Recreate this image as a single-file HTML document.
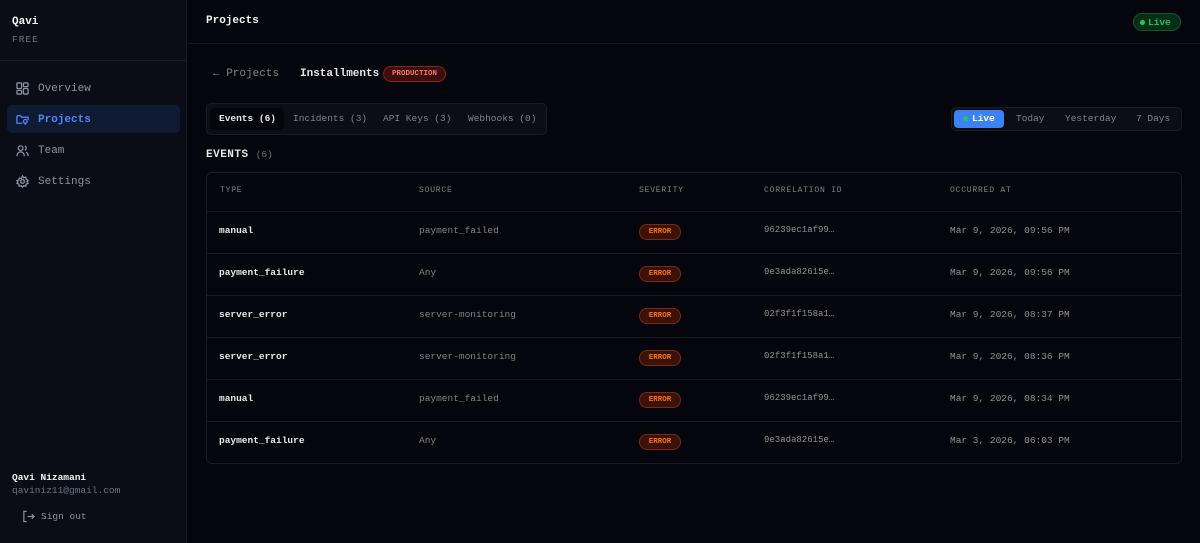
<!DOCTYPE html>
<html><head><meta charset="utf-8"><style>
*{box-sizing:border-box;margin:0;padding:0}
body{width:1200px;height:543px;background:#05060d;font-family:"Liberation Mono",monospace;color:#e5e7eb;position:relative;overflow:hidden}
.side{position:absolute;left:0;top:0;width:187px;height:543px;background:#0a0d16;border-right:1px solid #151a26}
.abs{position:absolute;white-space:nowrap}
.nav{position:absolute;left:7px;width:173px;height:28px;border-radius:5px;display:flex;align-items:center;padding-left:9px;font-size:11px;color:#8a919e;padding-top:1px}
.nav svg{width:13px;height:13px;margin-right:9px;fill:none;stroke:currentColor;stroke-width:1.4}
.nav.act{background:#0f1a33;color:#4f86f7;font-weight:bold}
.tbl{position:absolute;left:206px;top:172px;width:976px;height:292px;border:1px solid #171c27;border-radius:6px;overflow:hidden}
.row{position:absolute;left:0;right:0;height:42px;border-top:1px solid #151a24}
.row span{position:absolute;top:13px;font-size:9.5px;white-space:nowrap}
.err{position:absolute;left:432px;top:12px;width:42px;height:16px;border-radius:8px;background:#3b1108;border:1px solid #7a2a10;color:#f97316;font-size:7.5px;font-weight:bold;display:flex;align-items:center;justify-content:center}
</style></head><body>
<div class="side">
<div class="abs" style="left:12px;top:16px;font-size:11px;font-weight:bold;color:#f3f4f6">Qavi</div>
<div class="abs" style="left:12px;top:34px;font-size:9.5px;color:#6b7280;letter-spacing:1px">FREE</div>
<div style="position:absolute;left:0;top:60px;width:186px;border-top:1px solid #171c27"></div>
<div class="nav" style="top:74px"><svg viewBox="0 0 14 14"><rect x="1" y="1" width="5" height="6" rx="1"/><rect x="8" y="1" width="5" height="4" rx="1"/><rect x="1" y="9" width="5" height="4" rx="1"/><rect x="8" y="7" width="5" height="6" rx="1"/></svg>Overview</div>
<div class="nav act" style="top:105px"><svg viewBox="0 0 14 14"><path d="M1 3v8h6M1 3h4l1 1.5h7v3"/><circle cx="10" cy="9" r="2"/><path d="M10 11v2"/></svg>Projects</div>
<div class="nav" style="top:136px"><svg viewBox="0 0 14 14"><circle cx="5" cy="4.5" r="2.5"/><path d="M1 13c0-3 2-4.5 4-4.5s4 1.5 4 4.5M9.5 2.2a2.5 2.5 0 010 4.6M11 8.8c1.3.6 2 2 2 4.2"/></svg>Team</div>
<div class="nav" style="top:167px"><svg viewBox="0 0 14 14"><circle cx="7" cy="7" r="2"/><path d="M7 1l1.3 1.8 2.2-.5.4 2.2L13 6l-1.2 1.5L13 9l-2 .9-.4 2.2-2.2-.5L7 13l-1.3-1.4-2.2.5-.4-2.2L1 9l1.2-1.5L1 6l2.1-.5.4-2.2 2.2.5z"/></svg>Settings</div>
<div class="abs" style="left:12px;top:472px;font-size:9.5px;font-weight:bold;color:#f3f4f6">Qavi Nizamani</div>
<div class="abs" style="left:12px;top:485px;font-size:9.5px;color:#6b7280">qaviniz11@gmail.com</div>
<div class="abs" style="left:22px;top:510px;font-size:9.5px;color:#8a919e;display:flex;align-items:center"><svg width="13" height="13" viewBox="0 0 14 14" fill="none" stroke="#8a919e" stroke-width="1.3" style="margin-right:6px"><path d="M5 1.5H2v11h3M6 7h7M10.5 4.5L13 7l-2.5 2.5"/></svg>Sign out</div>
</div>
<div style="position:absolute;left:188px;top:43px;right:0;border-top:1px solid #151a24"></div>
<div class="abs" style="left:206px;top:15px;font-size:11px;font-weight:bold;color:#f3f4f6">Projects</div>
<div class="abs" style="left:1133px;top:13px;width:48px;height:18px;border-radius:10px;background:#052e16;border:1px solid #14532d;color:#22c55e;font-size:9.5px;font-weight:bold;display:flex;align-items:center;padding-left:6px"><span style="display:inline-block;width:5px;height:5px;border-radius:3px;background:#22c55e;margin-right:3px"></span>Live</div>
<div class="abs" style="left:213px;top:68px;font-size:11px;color:#7b828f">← Projects</div>
<div class="abs" style="left:300px;top:68px;font-size:11px;font-weight:bold;color:#e5e7eb">Installments</div>
<div class="abs" style="left:383px;top:66px;width:63px;height:16px;border-radius:8px;background:#3b0f0c;border:1px solid #8b2318;color:#f87171;font-size:7.5px;font-weight:bold;display:flex;align-items:center;justify-content:center">PRODUCTION</div>
<div class="abs" style="left:206px;top:103px;width:341px;height:32px;background:#0b0e17;border:1px solid #171c27;border-radius:5px"></div>
<div class="abs" style="left:210px;top:108px;width:74px;height:22px;background:#05060b;border-radius:4px"></div>
<div class="abs" style="left:219px;top:113px;font-size:9.5px;font-weight:bold;color:#e5e7eb">Events (6)</div>
<div class="abs" style="left:293px;top:113px;font-size:9.5px;color:#7b828f">Incidents (3)</div>
<div class="abs" style="left:383px;top:113px;font-size:9.5px;color:#7b828f">API Keys (3)</div>
<div class="abs" style="left:468px;top:113px;font-size:9.5px;color:#7b828f">Webhooks (0)</div>
<div class="abs" style="left:951px;top:107px;width:231px;height:24px;background:#0b0e17;border:1px solid #171c27;border-radius:5px"></div>
<div class="abs" style="left:954px;top:110px;width:50px;height:18px;background:#3b82f6;border-radius:4px"></div>
<div class="abs" style="left:963px;top:113px;font-size:9.5px;font-weight:bold;color:#fff;display:flex;align-items:center"><span style="display:inline-block;width:5px;height:5px;border-radius:3px;background:#22c55e;margin-right:4px"></span>Live</div>
<div class="abs" style="left:1016px;top:113px;font-size:9.5px;color:#7b828f">Today</div>
<div class="abs" style="left:1065px;top:113px;font-size:9.5px;color:#7b828f">Yesterday</div>
<div class="abs" style="left:1136px;top:113px;font-size:9.5px;color:#7b828f">7 Days</div>
<div class="abs" style="left:206px;top:149px;font-size:11px;font-weight:bold;color:#e5e7eb;letter-spacing:.5px">EVENTS <span style="font-size:9.5px;font-weight:normal;color:#6b7280;letter-spacing:0">(6)</span></div>
<div class="tbl">
<div class="abs" style="left:13px;top:13px;font-size:8px;color:#7b828f;letter-spacing:.8px">TYPE</div>
<div class="abs" style="left:212px;top:13px;font-size:8px;color:#7b828f;letter-spacing:.8px">SOURCE</div>
<div class="abs" style="left:432px;top:13px;font-size:8px;color:#7b828f;letter-spacing:.8px">SEVERITY</div>
<div class="abs" style="left:557px;top:13px;font-size:8px;color:#7b828f;letter-spacing:.8px">CORRELATION ID</div>
<div class="abs" style="left:743px;top:13px;font-size:8px;color:#7b828f;letter-spacing:.8px">OCCURRED AT</div>
<div class="row" style="top:38px"><span style="left:12px;font-weight:bold;color:#e5e7eb">manual</span><span style="left:212px;color:#7b828f">payment_failed</span><div class="err">ERROR</div><span style="left:557px;color:#8a919e;font-size:9px">96239ec1af99…</span><span style="left:743px;color:#8a919e">Mar 9, 2026, 09:56 PM</span></div>
<div class="row" style="top:80px"><span style="left:12px;font-weight:bold;color:#e5e7eb">payment_failure</span><span style="left:212px;color:#7b828f">Any</span><div class="err">ERROR</div><span style="left:557px;color:#8a919e;font-size:9px">9e3ada82615e…</span><span style="left:743px;color:#8a919e">Mar 9, 2026, 09:56 PM</span></div>
<div class="row" style="top:122px"><span style="left:12px;font-weight:bold;color:#e5e7eb">server_error</span><span style="left:212px;color:#7b828f">server-monitoring</span><div class="err">ERROR</div><span style="left:557px;color:#8a919e;font-size:9px">02f3f1f158a1…</span><span style="left:743px;color:#8a919e">Mar 9, 2026, 08:37 PM</span></div>
<div class="row" style="top:164px"><span style="left:12px;font-weight:bold;color:#e5e7eb">server_error</span><span style="left:212px;color:#7b828f">server-monitoring</span><div class="err">ERROR</div><span style="left:557px;color:#8a919e;font-size:9px">02f3f1f158a1…</span><span style="left:743px;color:#8a919e">Mar 9, 2026, 08:36 PM</span></div>
<div class="row" style="top:206px"><span style="left:12px;font-weight:bold;color:#e5e7eb">manual</span><span style="left:212px;color:#7b828f">payment_failed</span><div class="err">ERROR</div><span style="left:557px;color:#8a919e;font-size:9px">96239ec1af99…</span><span style="left:743px;color:#8a919e">Mar 9, 2026, 08:34 PM</span></div>
<div class="row" style="top:248px"><span style="left:12px;font-weight:bold;color:#e5e7eb">payment_failure</span><span style="left:212px;color:#7b828f">Any</span><div class="err">ERROR</div><span style="left:557px;color:#8a919e;font-size:9px">9e3ada82615e…</span><span style="left:743px;color:#8a919e">Mar 3, 2026, 06:03 PM</span></div>
</div>
</body></html>
